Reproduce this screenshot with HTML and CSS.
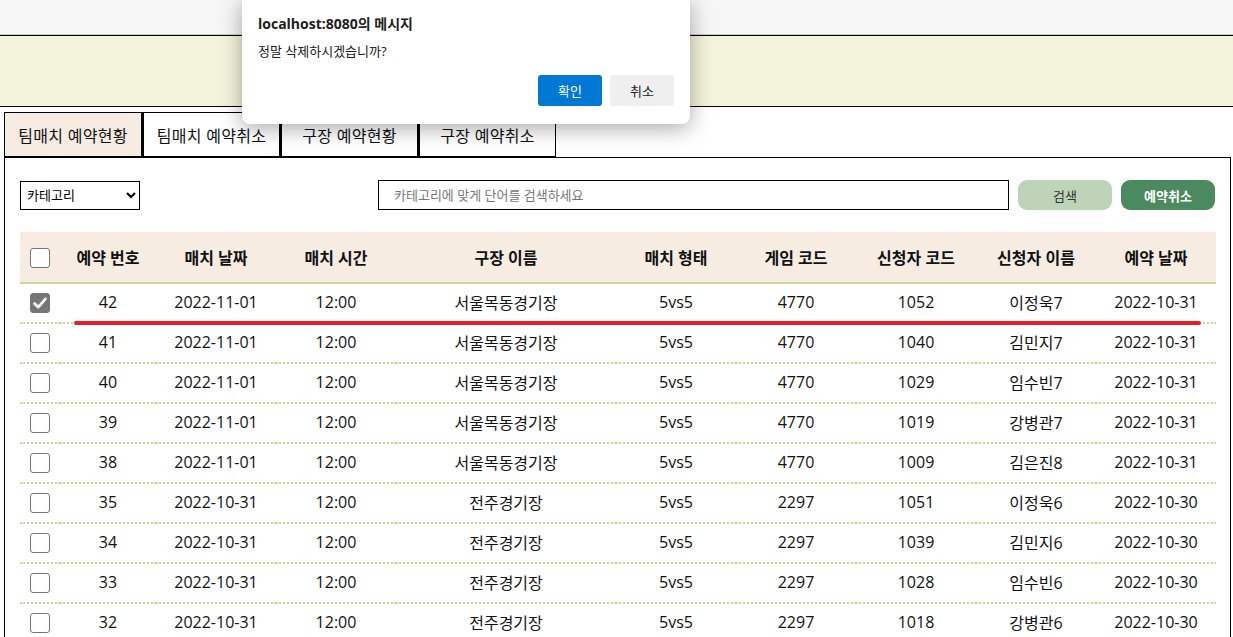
FILE: index.html
```html
<!DOCTYPE html>
<html lang="ko">
<head>
<meta charset="utf-8">
<title>예약취소</title>
<link rel="stylesheet" href="styles.css">
</head>
<body>
<div class="topbar"></div>
<div class="banner"></div>

<div class="page">
  <nav class="tabs">
    <div class="tab active">팀매치 예약현황</div>
    <div class="tab">팀매치 예약취소</div>
    <div class="tab">구장 예약현황</div>
    <div class="tab">구장 예약취소</div>
  </nav>

  <section class="panel">
    <div class="toolbar">
      <select class="category"><option>카테고리</option></select>
      <div class="spacer"></div>
      <input class="search" type="text" placeholder="카테고리에 맞게 단어를 검색하세요">
      <button class="btn btn-search">검색</button>
      <button class="btn btn-cancel">예약취소</button>
    </div>

    <div class="table-wrap">
      <table class="grid">
        <thead>
          <tr>
            <th class="c-check"><span class="cb"></span></th>
            <th class="c-no">예약 번호</th>
            <th class="c-w">매치 날짜</th>
            <th class="c-w">매치 시간</th>
            <th class="c-wide">구장 이름</th>
            <th class="c-w">매치 형태</th>
            <th class="c-w">게임 코드</th>
            <th class="c-w">신청자 코드</th>
            <th class="c-w">신청자 이름</th>
            <th class="c-w">예약 날짜</th>
          </tr>
        </thead>
        <tbody>
          <tr>
            <td><span class="cb checked"><svg viewBox="0 0 20 20" width="20" height="20"><path d="M4.5 10.5 L8.3 14.2 L15.5 5.8" fill="none" stroke="#fff" stroke-width="2.6" stroke-linecap="round" stroke-linejoin="round"/></svg></span></td>
            <td>42</td><td>2022-11-01</td><td>12:00</td><td>서울목동경기장</td><td>5vs5</td><td>4770</td><td>1052</td><td>이정욱7</td><td>2022-10-31</td>
          </tr>
          <tr>
            <td><span class="cb"></span></td>
            <td>41</td><td>2022-11-01</td><td>12:00</td><td>서울목동경기장</td><td>5vs5</td><td>4770</td><td>1040</td><td>김민지7</td><td>2022-10-31</td>
          </tr>
          <tr>
            <td><span class="cb"></span></td>
            <td>40</td><td>2022-11-01</td><td>12:00</td><td>서울목동경기장</td><td>5vs5</td><td>4770</td><td>1029</td><td>임수빈7</td><td>2022-10-31</td>
          </tr>
          <tr>
            <td><span class="cb"></span></td>
            <td>39</td><td>2022-11-01</td><td>12:00</td><td>서울목동경기장</td><td>5vs5</td><td>4770</td><td>1019</td><td>강병관7</td><td>2022-10-31</td>
          </tr>
          <tr>
            <td><span class="cb"></span></td>
            <td>38</td><td>2022-11-01</td><td>12:00</td><td>서울목동경기장</td><td>5vs5</td><td>4770</td><td>1009</td><td>김은진8</td><td>2022-10-31</td>
          </tr>
          <tr>
            <td><span class="cb"></span></td>
            <td>35</td><td>2022-10-31</td><td>12:00</td><td>전주경기장</td><td>5vs5</td><td>2297</td><td>1051</td><td>이정욱6</td><td>2022-10-30</td>
          </tr>
          <tr>
            <td><span class="cb"></span></td>
            <td>34</td><td>2022-10-31</td><td>12:00</td><td>전주경기장</td><td>5vs5</td><td>2297</td><td>1039</td><td>김민지6</td><td>2022-10-30</td>
          </tr>
          <tr>
            <td><span class="cb"></span></td>
            <td>33</td><td>2022-10-31</td><td>12:00</td><td>전주경기장</td><td>5vs5</td><td>2297</td><td>1028</td><td>임수빈6</td><td>2022-10-30</td>
          </tr>
          <tr>
            <td><span class="cb"></span></td>
            <td>32</td><td>2022-10-31</td><td>12:00</td><td>전주경기장</td><td>5vs5</td><td>2297</td><td>1018</td><td>강병관6</td><td>2022-10-30</td>
          </tr>
        </tbody>
      </table>
      <div class="strike"></div>
    </div>
  </section>
</div>

<div class="dialog">
  <div class="dlg-title">localhost:8080의 메시지</div>
  <div class="dlg-msg">정말 삭제하시겠습니까?</div>
  <div class="dlg-actions">
    <button class="dbtn primary">확인</button>
    <button class="dbtn">취소</button>
  </div>
</div>
</body>
</html>
```

FILE: styles.css
```css
* { box-sizing: border-box; }

html, body {
  margin: 0;
  padding: 0;
  background: #fff;
  font-family: "Open Sans", "Noto Sans CJK KR", sans-serif;
  color: #111;
}

.topbar {
  height: 35px;
  background: #f6f6f6;
  border-bottom: 1px solid #c8c8c8;
}

.banner {
  height: 72px;
  background: #f4f4dc;
  border-top: 1px solid #000;
  border-bottom: 1px solid #000;
}

.page {
  padding: 5px 2px 0 4px;
}

.tabs {
  display: flex;
  height: 45px;
}

.tab {
  width: 138px;
  border: 1px solid #000;
  display: flex;
  align-items: center;
  justify-content: center;
  font-size: 16px;
  letter-spacing: 0.3px;
  background: #fff;
  color: #111;
}

.tab + .tab { border-left-width: 2px; }

.tab.active { background: #f6ece2; }

.panel {
  border-top: 1px solid #000;
  border-left: 1px solid #000;
  border-right: 1px solid #000;
  padding: 22px 15px 0 15px;
  position: relative;
}

.toolbar {
  display: flex;
  align-items: center;
  height: 30px;
}

.category {
  width: 120px;
  height: 29px;
  border: 1px solid #000;
  border-radius: 0;
  background: #fff;
  font-family: "Open Sans", "Noto Sans CJK KR", sans-serif;
  font-size: 13px;
  color: #000;
  padding: 0 2px;
}

.spacer { flex: 1; }

.search {
  width: 631px;
  height: 30px;
  border: 1px solid #000;
  padding: 0 15px;
  font-family: "Open Sans", "Noto Sans CJK KR", sans-serif;
  font-size: 13px;
  outline: none;
}

.search::placeholder { color: #777; }

.btn {
  height: 30px;
  width: 94px;
  border: none;
  border-radius: 9px;
  font-family: "Open Sans", "Noto Sans CJK KR", sans-serif;
  font-size: 13px;
  margin-left: 9px;
  padding: 0;
}

.btn-search {
  background: #bfd3b8;
  color: #333;
}

.btn-cancel {
  background: #4a8a5e;
  color: #fff;
  font-weight: bold;
}

.table-wrap {
  margin-top: 22px;
  position: relative;
}

.grid {
  width: 100%;
  border-collapse: collapse;
  table-layout: fixed;
  font-size: 16px;
}

.grid th {
  height: 51px;
  background: #f6ece2;
  border-bottom: 2px solid #d5d5a4;
  font-weight: bold;
  text-align: center;
  padding: 0;
}

.grid td {
  height: 40px;
  text-align: center;
  border-bottom: 2px dotted #d3d39a;
  padding: 0 0 2px 0;
}

.c-check { width: 40px; }
.c-no { width: 96px; }
.c-w { width: 120px; }
.c-wide { width: 220px; }

.cb {
  display: inline-block;
  width: 20px;
  height: 20px;
  border: 1px solid #767676;
  border-radius: 3px;
  background: #fff;
  vertical-align: middle;
}

.cb.checked {
  background: #767676;
  border-color: #767676;
  position: relative;
}

.cb.checked svg {
  position: absolute;
  left: -1px;
  top: -1px;
}

.strike {
  position: absolute;
  left: 54px;
  top: 89px;
  width: 1127px;
  height: 4px;
  background: #ea1c24;
  border-radius: 2px;
}

.dialog {
  position: absolute;
  left: 242px;
  top: 0;
  width: 448px;
  height: 124px;
  background: #fff;
  border-radius: 0 0 8px 8px;
  box-shadow: 0 4px 22px rgba(0, 0, 0, 0.35);
  padding: 15px 16px 0 16px;
}

.dlg-title {
  font-size: 14px;
  font-weight: bold;
  color: #202020;
  height: 18px;
  line-height: 18px;
}

.dlg-msg {
  margin-top: 10px;
  font-size: 13px;
  color: #202020;
  line-height: 17px;
}

.dlg-actions {
  display: flex;
  justify-content: flex-end;
  gap: 8px;
  margin-top: 15px;
}

.dbtn {
  width: 64px;
  height: 31px;
  border: none;
  border-radius: 3px;
  background: #efefef;
  color: #202020;
  font-family: "Open Sans", "Noto Sans CJK KR", sans-serif;
  font-size: 13px;
  padding: 0;
}

.dbtn.primary {
  background: #0078d4;
  color: #fff;
}
```
